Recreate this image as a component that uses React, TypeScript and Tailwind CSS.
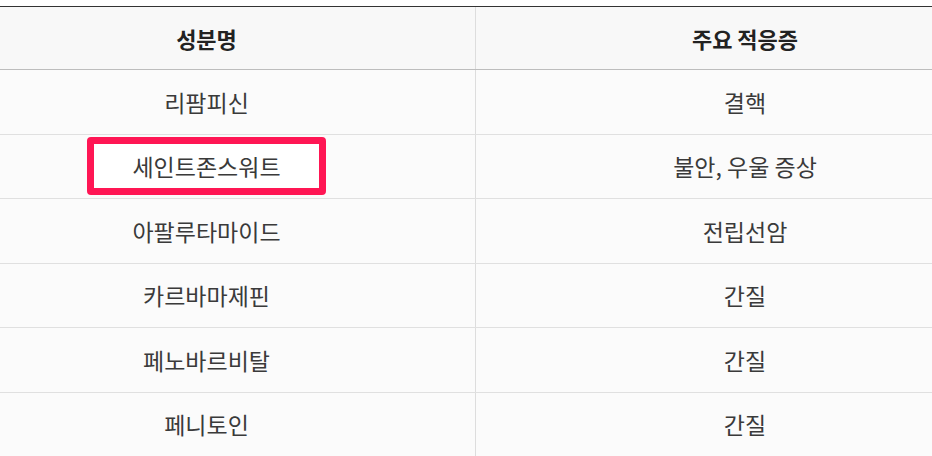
import React from 'react';

type Row = { name: string; use: string; highlight?: boolean };

const rows: Row[] = [
  { name: '리팜피신', use: '결핵' },
  { name: '세인트존스워트', use: '불안, 우울 증상', highlight: true },
  { name: '아팔루타마이드', use: '전립선암' },
  { name: '카르바마제핀', use: '간질' },
  { name: '페노바르비탈', use: '간질' },
  { name: '페니토인', use: '간질' },
];

const font = { fontFamily: '"Noto Sans CJK KR", "Noto Sans", sans-serif' };

export default function App() {
  return (
    <div className="w-[932px] h-[456px] overflow-hidden bg-white" style={font}>
      <div className="ml-[-62px] w-[1076px] mt-[6px] border-t border-[#333]">
        <div className="grid grid-cols-2 bg-[#f8f8f8] border-b border-[#bdbdbd]">
          <div className="h-[62px] flex items-center justify-center border-r border-[#ddd] text-[22px] font-bold text-[#222]">
            성분명
          </div>
          <div className="h-[62px] flex items-center justify-center text-[22px] font-bold text-[#222]">
            주요 적응증
          </div>
        </div>
        {rows.map((r) => (
          <div key={r.name} className="grid grid-cols-2 bg-[#fbfbfb] border-b border-[#e0e0e0]">
            <div className="h-[63.5px] flex items-center justify-center border-r border-[#ddd] text-[23px] text-[#3a3a3a]">
              {r.highlight ? (
                <span className="w-[239px] h-[58px] flex items-center justify-center border-[7px] border-[#ff1654] rounded-[4px] bg-white">
                  {r.name}
                </span>
              ) : (
                r.name
              )}
            </div>
            <div className="h-[63.5px] flex items-center justify-center text-[23px] text-[#3a3a3a]">
              {r.use}
            </div>
          </div>
        ))}
      </div>
    </div>
  );
}
